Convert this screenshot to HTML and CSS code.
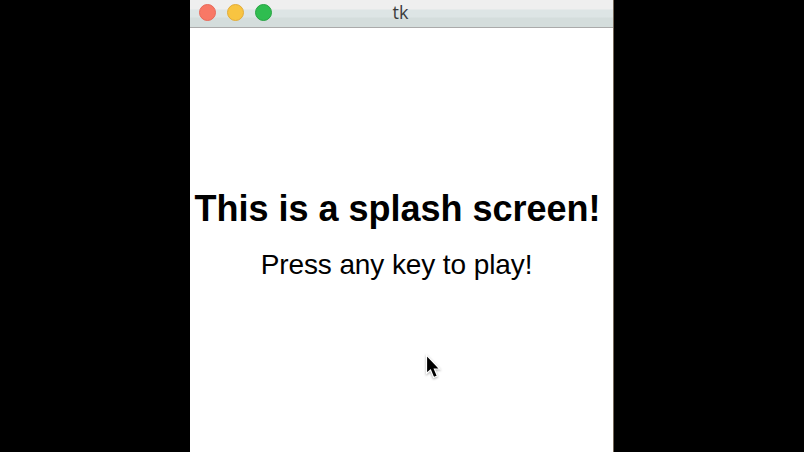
FILE: index.html
```html
<!DOCTYPE html>
<html lang="en">
<head>
<meta charset="utf-8">
<title>tk</title>
<link rel="stylesheet" href="styles.css">
</head>
<body>
<main class="window">
  <header class="titlebar">
    <div class="controls">
      <span class="dot close"></span>
      <span class="dot minimize"></span>
      <span class="dot zoom"></span>
    </div>
    <span class="title">tk</span>
  </header>
  <section class="content">
    <h1>This is a splash screen!</h1>
    <p>Press any key to play!</p>
  </section>
</main>
<svg class="cursor" width="19" height="28" viewBox="0 0 19 28">
  <path d="M1.5 1V19.5L5.5 16L8.6 23.5L12.4 22L9.4 15H14.8Z" fill="#000" stroke="#fff" stroke-width="1.2"/>
</svg>
</body>
</html>
```
FILE: styles.css
```css
* { box-sizing: border-box; margin: 0; }
body {
  height: 452px;
  overflow: hidden;
  background: #000;
  font-family: "Liberation Sans", Arial, sans-serif;
}
.window {
  width: 424px;
  height: 452px;
  margin-left: 190px;
  background: #fff;
  border-right: 1px solid #75695a;
}
.titlebar {
  display: grid;
  grid-template-columns: 1fr auto 1fr;
  align-items: center;
  height: 28px;
  padding: 0 11px 2px 9px;
  background: linear-gradient(#efefef 0 9px, #dde5e5 10px 17px, #d4dddc 18px);
  border-bottom: 1px solid #aaa;
}
.controls { display: flex; gap: 11px; }
.dot {
  width: 17px;
  height: 17px;
  border: 1px solid;
  border-radius: 50%;
}
.close { background: #f87866; border-color: #e9695a; }
.minimize { background: #f8c441; border-color: #e2ac38; }
.zoom { background: #2fbd50; border-color: #27a443; }
.title {
  margin-top: -1px;
  font: 18px/24px "Open Sans", sans-serif;
  color: #3c3c3c;
}
.content {
  padding-top: 160px;
  text-align: center;
  white-space: nowrap;
}
h1 { font-size: 36px; line-height: 42px; padding-right: 8px; }
p {
  margin-top: 18px;
  padding-right: 10px;
  font-size: 28px;
  line-height: 34px;
  letter-spacing: -0.1px;
}
.cursor {
  position: absolute;
  left: 425px;
  top: 354px;
  filter: drop-shadow(0 1px 1px #0005);
}
```
